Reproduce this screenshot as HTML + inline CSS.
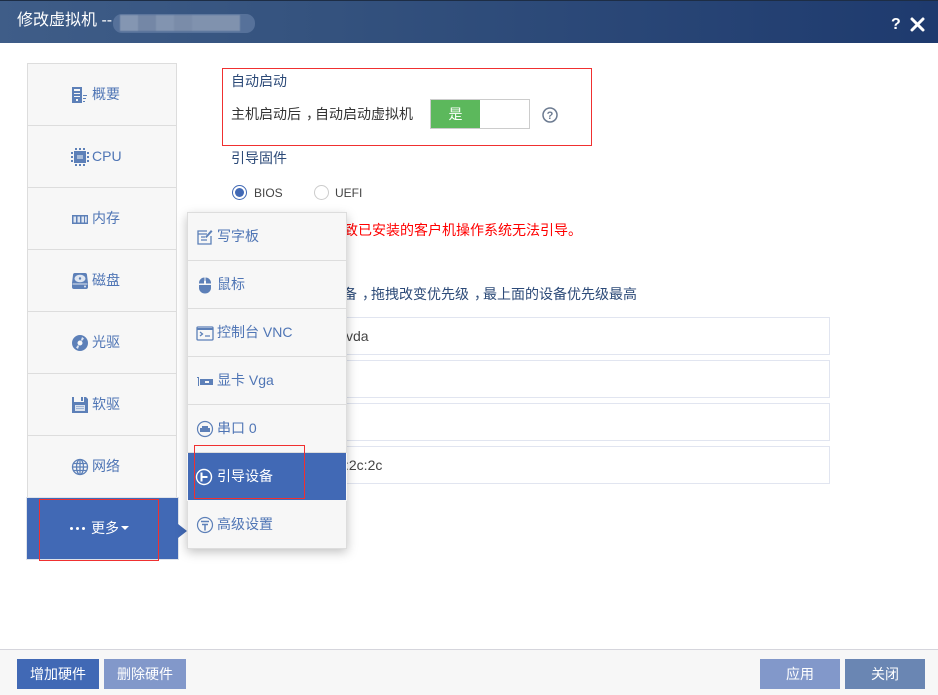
<!DOCTYPE html>
<html lang="zh">
<head>
<meta charset="utf-8">
<style>
html,body{margin:0;padding:0;background:#fff}
body{width:938px;height:695px;position:relative;overflow:hidden;font-family:"Liberation Sans","Noto Sans CJK SC",sans-serif;font-size:14px;color:#333}
.a{position:absolute;white-space:nowrap}
#hd{left:0;top:0;width:938px;height:43px;background:linear-gradient(90deg,#3f5d88 0%,#34527e 35%,#1e3a6e 100%);border-top:1px solid #1d2d45;box-sizing:border-box}
.side{left:27px;width:148px;height:61px;background:#f7f7f7;border:1px solid #ddd;border-bottom:0;color:#4f75b5;font-size:14px;line-height:61px}
.side span{position:absolute;left:64px;top:0}
.side svg{position:absolute;left:43px;top:22px}
.mi{left:187px;width:158px;height:47px;background:#f7f7f7;border-bottom:1px solid #ddd;border-left:1px solid #ddd;border-right:1px solid #ddd;color:#4f75b5;font-size:14px;line-height:47px}
.mi span{position:absolute;left:29px;top:0}
.mi svg{position:absolute;left:8px;top:15px}
.row{left:230px;width:598px;height:36px;border:1px solid #e1e5f0;line-height:36px}
.lbl{color:#2c4a78;font-size:14px}
.btn{top:659px;height:30px;line-height:30px;text-align:center;color:#fff;font-size:14px}
.rb{width:15px;height:15px;border-radius:50%;box-sizing:border-box}
.c{position:relative;left:5px}
</style>
</head>
<body>
<div class="a" id="hd"></div>
<div class="a" style="left:17px;top:11px;color:#fff;font-size:16px;line-height:20px">修改虚拟机 --</div>
<div class="a" style="left:113px;top:14px;width:142px;height:19px;border-radius:9px;background:#56719a"></div>
<div class="a" style="left:120px;top:15px;width:120px;height:16px;background:linear-gradient(90deg,#8496b2 0 15%,#7487a6 15% 30%,#8294b0 30% 45%,#7a8ca9 45% 60%,#8092ae 60% 100%);filter:blur(.5px)"></div>
<div class="a" style="left:891px;top:15px;color:#fff;font-size:16px;font-weight:bold;line-height:20px">?</div>
<svg class="a" style="left:910px;top:17px" width="15" height="15" viewBox="0 0 15 15"><path d="M2 2L13 13M13 2L2 13" stroke="#fff" stroke-width="3" stroke-linecap="round"/></svg>

<!-- sidebar -->
<div class="a side" style="top:63px"><svg width="18" height="18" viewBox="0 0 18 18" fill="#5d80b8"><path d="M1 1h10v16H1zM3 3v2h6V3zM3 7v1h6V7zM3 10v1h6v-1zM5 13v2h2v-2z" fill-rule="evenodd"/><path d="M12 9h4v1h-4zM12 12h3v1h-3zM12 15h2v1h-2z"/></svg><span>概要</span></div>
<div class="a side" style="top:125px"><svg width="18" height="18" viewBox="0 0 18 18" fill="#5d80b8"><path d="M3 3h12v12H3z"/><path d="M6 7h6v4H6z" fill="#a9bcd8"/><path d="M0 4h2v2H0zM0 8h2v2H0zM0 12h2v2H0zM16 4h2v2h-2zM16 8h2v2h-2zM16 12h2v2h-2zM4 0h2v2H4zM8 0h2v2H8zM12 0h2v2h-2zM4 16h2v2H4zM8 16h2v2H8zM12 16h2v2h-2z"/></svg><span>CPU</span></div>
<div class="a side" style="top:187px"><svg width="18" height="18" viewBox="0 0 18 18" fill="#5d80b8"><path d="M1 5h16v9H1z"/><path d="M2.500 6.500h2.500v6H2.500zM6.500 6.500H9v6H6.500zM10.500 6.500H13v6h-2.500zM14 6.500h1.800v6H14z" fill="#dfe6f1"/></svg><span>内存</span></div>
<div class="a side" style="top:249px"><svg width="18" height="18" viewBox="0 0 18 18" fill="#5d80b8"><path d="M4 1h10q2 0 2 2l1 8v4q0 2-2 2H3q-2 0-2-2v-4l1-8q0-2 2-2z"/><ellipse cx="9" cy="6.500" rx="5.500" ry="3.800" fill="#dfe6f1"/><circle cx="9" cy="6.500" r="1.200"/><path d="M1.500 11.500h15v1h-15z" fill="#dfe6f1"/><circle cx="14" cy="14.500" r="1" fill="#dfe6f1"/></svg><span>磁盘</span></div>
<div class="a side" style="top:311px"><svg width="18" height="18" viewBox="0 0 18 18" fill="#5d80b8"><path d="M9 1a8 8 0 1 1 0 16A8 8 0 0 1 9 1zM9 6.500a2.500 2.500 0 1 0 0 5 2.500 2.500 0 0 0 0-5z" fill-rule="evenodd"/><path d="M11 3l2 1.500-2 2.500-1-1zM7 15l-2-1.500 2-2.500 1 1z" fill="#dfe6f1"/></svg><span>光驱</span></div>
<div class="a side" style="top:373px"><svg width="18" height="18" viewBox="0 0 18 18" fill="#5d80b8"><path d="M1 1h2v5h10V1h2l2 2v14H1zM4 9v6h10V9z" fill-rule="evenodd"/><path d="M10 1h2v4h-2zM5 10h8v1H5zM5 12h8v1H5z"/><path d="M4 9h10v6H4z" fill="#c7d4e8" opacity=".6"/></svg><span>软驱</span></div>
<div class="a side" style="top:435px"><svg width="18" height="18" viewBox="0 0 18 18" fill="none" stroke="#5d80b8" stroke-width="1.300"><circle cx="9" cy="9" r="7.500"/><ellipse cx="9" cy="9" rx="3.500" ry="7.500"/><path d="M1.500 9h15M2.500 5.500h13M2.500 12.500h13M9 1.500v15"/></svg><span>网络</span></div>
<div class="a" style="left:26px;top:497px;width:153px;height:63px;background:#4169b5;box-shadow:inset 0 0 0 1px #dfe3ea"></div>
<div class="a" style="left:70px;top:527px;width:3px;height:3px;border-radius:50%;background:#fff;box-shadow:6px 0 0 #fff,12px 0 0 #fff"></div>
<div class="a" style="left:91px;top:518px;color:#fff;font-size:14px;line-height:20px">更多</div>
<div class="a" style="left:121px;top:526px;width:0;height:0;border-left:4px solid transparent;border-right:4px solid transparent;border-top:4px solid #fff"></div>
<div class="a" style="left:39px;top:499px;width:118px;height:60px;border:1px solid #f03030"></div>
<div class="a" style="left:178px;top:524px;width:0;height:0;border-top:7px solid transparent;border-bottom:7px solid transparent;border-left:9px solid #4169b5"></div>

<!-- main content -->
<div class="a" style="left:222px;top:68px;width:368px;height:76px;border:1px solid #f03030"></div>
<div class="a lbl" style="left:231px;top:72px;line-height:18px">自动启动</div>
<div class="a" style="left:231px;top:105px;line-height:18px">主机启动后<span class="c">，</span>自动启动虚拟机</div>
<div class="a" style="left:430px;top:99px;width:98px;height:28px;border:1px solid #ccc;background:#fff"></div>
<div class="a" style="left:431px;top:100px;width:49px;height:28px;background:#5cb85c;color:#fff;text-align:center;line-height:28px;font-size:14px">是</div>
<svg class="a" style="left:541px;top:106px" width="18" height="18" viewBox="0 0 18 18"><circle cx="9" cy="9" r="7" fill="none" stroke="#6b7a90" stroke-width="1.500"/><text x="9" y="13" text-anchor="middle" font-size="11" font-weight="bold" font-family="Liberation Sans" fill="#6b7a90">?</text></svg>
<div class="a lbl" style="left:231px;top:149px;line-height:18px">引导固件</div>
<div class="a rb" style="left:232px;top:185px;background:#fff;border:1px solid #4169b5"></div>
<div class="a" style="left:235px;top:188px;width:9px;height:9px;border-radius:50%;background:#4169b5"></div>
<div class="a" style="left:254px;top:185px;font-size:12px;line-height:16px;color:#444">BIOS</div>
<div class="a rb" style="left:314px;top:185px;background:#fff;border:1px solid #ccc"></div>
<div class="a" style="left:335px;top:185px;font-size:12px;line-height:16px;color:#444">UEFI</div>
<div class="a" style="left:344px;top:221px;color:#f00;line-height:18px">致已安装的客户机操作系统无法引导。</div>
<div class="a lbl" style="left:343px;top:285px;line-height:18px">备<span class="c">，</span>拖拽改变优先级<span class="c">，</span>最上面的设备优先级最高</div>
<div class="a row" style="top:317px"><span class="a" style="left:115px;top:0;color:#444">vda</span></div>
<div class="a row" style="top:360px"></div>
<div class="a row" style="top:403px"></div>
<div class="a row" style="top:446px"><span class="a" style="left:114px;top:0;color:#444">:2c:2c</span></div>

<!-- popup menu -->
<div class="a" style="left:187px;top:212px;width:160px;height:336px;background:#f7f7f7;box-shadow:0 4px 10px rgba(0,0,0,.25)"></div>
<div class="a mi" style="border-top:1px solid #ddd;top:212px"><svg width="18" height="18" viewBox="0 0 18 18" fill="none" stroke="#5d80b8" stroke-width="1.300"><path d="M15 8v8H2V3h9"/><path d="M2 6h9M5 9h4M5 12h6"/><path d="M9 9l6-7 1.500 1.500-6 6.500z" fill="#5d80b8" stroke="none"/></svg><span>写字板</span></div>
<div class="a mi" style="top:261px"><svg width="18" height="18" viewBox="0 0 18 18" fill="#5d80b8"><path d="M3 7.500V7a5.500 5.500 0 0 1 5.500-5.500v3l-.5.500v2.500zM9.500 1.500A5.500 5.500 0 0 1 15 7v.5h-5V5l-.5-.5zM3 9h12v3a6 5.500 0 0 1-12 0z"/></svg><span>鼠标</span></div>
<div class="a mi" style="top:309px"><svg width="18" height="18" viewBox="0 0 18 18" fill="none" stroke="#5d80b8" stroke-width="1.300"><rect x="1" y="3" width="16" height="13" rx="1"/><path d="M1 5h16" stroke-width="2"/><path d="M4 8l2.500 2L4 12M9 12h5"/></svg><span>控制台 VNC</span></div>
<div class="a mi" style="top:357px"><svg width="18" height="18" viewBox="0 0 18 18" fill="#5d80b8"><path d="M1 5h2v9H2V6H1zM4 7h13v6H4zM9 9v2h4V9z" fill-rule="evenodd"/></svg><span>显卡 Vga</span></div>
<div class="a mi" style="top:405px"><svg width="18" height="18" viewBox="0 0 18 18"><circle cx="9" cy="9" r="7.500" fill="none" stroke="#5d80b8" stroke-width="1.200"/><path d="M4 12V8h2V6h6v2h2v4z" fill="#5d80b8"/></svg><span>串口 0</span></div>
<div class="a" style="left:188px;top:453px;width:158px;height:47px;background:#4169b5;color:#fff;font-size:14px;line-height:47px"><svg class="a" style="left:7px;top:15px" width="18" height="18" viewBox="0 0 18 18" fill="none" stroke="#fff" stroke-width="1.400"><circle cx="9" cy="9" r="7.500"/><path d="M6.500 4.500v9M6.500 9h6" stroke-width="2"/></svg><span class="a" style="left:29px;top:0">引导设备</span></div>
<div class="a" style="left:194px;top:445px;width:109px;height:52px;border:1px solid #f03030"></div>
<div class="a mi" style="top:501px"><svg width="18" height="18" viewBox="0 0 18 18" fill="none" stroke="#5d80b8" stroke-width="1.200"><circle cx="9" cy="9" r="7.500"/><path d="M5 5.500h8M6 8.500h6M9 8.500v6" stroke-width="1.500"/></svg><span>高级设置</span></div>

<!-- footer -->
<div class="a" style="left:0;top:649px;width:938px;height:46px;background:#f7f7f7;border-top:1px solid #d5d5dc;box-sizing:border-box"></div>
<div class="a btn" style="left:17px;width:82px;background:#4169b5">增加硬件</div>
<div class="a btn" style="left:104px;width:82px;background:#8298ca">删除硬件</div>
<div class="a btn" style="left:760px;width:80px;background:#8298ca">应用</div>
<div class="a btn" style="left:845px;width:80px;background:#6a86b3">关闭</div>
</body>
</html>
